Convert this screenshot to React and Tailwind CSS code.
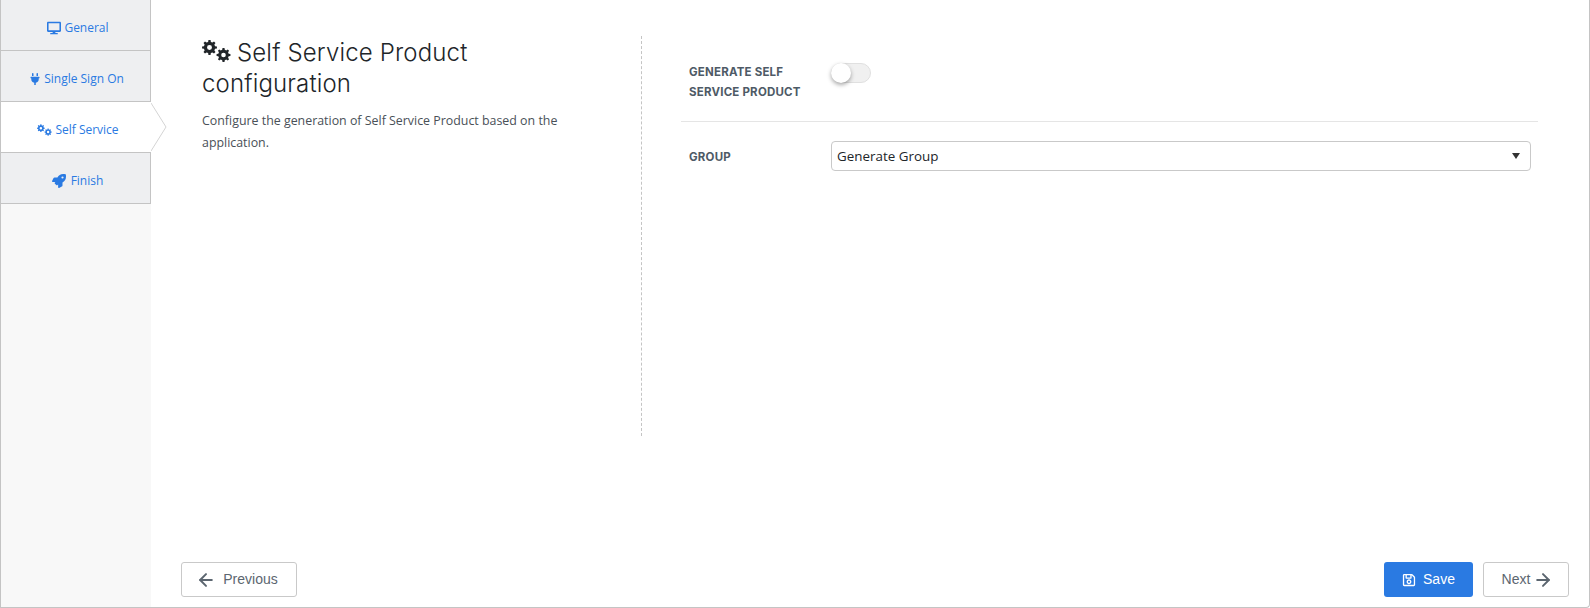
import React from 'react';
import { ArrowLeft, ArrowRight } from 'lucide-react';
import { FaDesktop, FaPlug, FaRocket, FaRegSave } from 'react-icons/fa';

// builds one gear outline with a round hole, 8 teeth
const gearPath = (cx, cy, r) => {
  const pts = [];
  const teeth = 8;
  for (let i = 0; i < teeth; i++) {
    const a = (i / teeth) * Math.PI * 2;
    const step = Math.PI / teeth;
    const corners = [
      [a - step * 0.62, r * 0.76],
      [a - step * 0.36, r],
      [a + step * 0.36, r],
      [a + step * 0.62, r * 0.76],
    ];
    corners.forEach(([t, d]) => pts.push(`${(cx + Math.cos(t) * d).toFixed(2)} ${(cy + Math.sin(t) * d).toFixed(2)}`));
  }
  const h = r * 0.33;
  return `M${pts.join(' L')} Z M${cx - h} ${cy} a${h} ${h} 0 1 0 ${h * 2} 0 a${h} ${h} 0 1 0 ${-h * 2} 0 Z`;
};

const Cogs = ({ className, width, height }) => (
  <svg className={className} width={width} height={height} viewBox="0 0 29 22" fill="currentColor">
    <path fillRule="evenodd" d={gearPath(7.5, 7.5, 7.5)} />
    <path fillRule="evenodd" d={gearPath(21.5, 15, 7)} />
  </svg>
);

const tabs = [
  { label: 'General', icon: <FaDesktop size={14} />, cls: 'gap-[3px] pl-[5px]' },
  { label: 'Single Sign On', icon: <FaPlug size={12} />, cls: 'gap-[3px] pl-[2px]' },
  { label: 'Self Service', icon: <Cogs width={15} height={12} />, cls: 'gap-[3px] pl-[4px]', active: true },
  { label: 'Finish', icon: <FaRocket size={14} />, cls: 'gap-[5px] pl-[4px]' },
];

const App = () => {
  return (
    <div className="h-[608px] w-[1590px] flex bg-white border-l border-r border-b border-[#c4c4c4] rounded-br-[4px] overflow-hidden font-['Open_Sans',sans-serif]">
      {/* Wizard steps */}
      <div className="w-[150px] shrink-0 bg-[#f8f8f8] flex flex-col">
        {tabs.map((tab) => (
          <div
            key={tab.label}
            className={`relative h-[51px] shrink-0 pt-[6px] border-b border-[#c4c4c4] flex items-center justify-center ${tab.cls} text-[12px] text-[#2a7ae2] ${
              tab.active ? 'bg-white' : 'bg-[#eeeff1] border-r'
            }`}
          >
            {tab.icon}
            <span>{tab.label}</span>
            {tab.active && (
              <svg className="absolute left-[150px] top-0" width="16" height="50" viewBox="0 0 16 50" fill="none">
                <path d="M0 0 L15 25 L0 50 Z" fill="#fff" />
                <path d="M0 1 L15 25 L0 49" stroke="#d4d4d4" strokeWidth="1" />
              </svg>
            )}
          </div>
        ))}
      </div>

      {/* Main */}
      <div className="flex-1 flex flex-col min-w-0">
        <div className="flex-1 flex pt-[36px] min-h-0">
          <div className="w-[491px] shrink-0 h-[400px] border-r border-dashed border-[#c4c4c4] pl-[51px] pr-[60px]">
            <h2 className="text-[24px] leading-[31px] mt-[1px] font-light text-[#212529] font-['Inter',sans-serif] tracking-[0.15px]">
              <Cogs className="inline-block align-[-1px] mr-[6px]" width={29} height={22} />
              Self Service Product configuration
            </h2>
            <p className="mt-[11px] text-[12.4px] leading-[22px] text-[#495057]">
              Configure the generation of Self Service Product based on the application.
            </p>
          </div>

          <div className="flex-1 pl-[39px] pr-[51px]">
            <div className="flex pl-[8px] pb-[19px] border-b border-[#e5e5e5] pt-[26px]">
              <div className="w-[142px] shrink-0 pr-[20px] text-[11.5px] leading-[20px] font-bold tracking-[0.2px] text-[#4e5a66] font-['Inter',sans-serif]">
                GENERATE SELF SERVICE PRODUCT
              </div>
              <div className="relative mt-[1px] w-[40px] h-[20px] rounded-full bg-[#f0f0f0] border border-[#e0e0e0]">
                <div className="absolute -left-[1px] -top-[1px] w-[20px] h-[20px] rounded-full bg-white shadow-[0_2px_4px_rgba(0,0,0,0.35)]" />
              </div>
            </div>
            <div className="flex items-center pl-[8px] pr-[7px] mt-[19px]">
              <div className="w-[142px] shrink-0 pt-[3px] text-[11.5px] font-bold tracking-[0.2px] text-[#4e5a66] font-['Inter',sans-serif]">GROUP</div>
              <div className="flex-1 h-[30px] px-[5px] flex items-center justify-between border border-[#c9c9c9] rounded-[4px] text-[13.4px] text-[#212529]">
                <span>Generate Group</span>
                <svg className="mr-[5px]" width="8" height="6" viewBox="0 0 8 6">
                  <path d="M0 0 H8 L4 6 Z" fill="#333" />
                </svg>
              </div>
            </div>
          </div>
        </div>

        {/* Footer buttons */}
        <div className="flex justify-between items-center pl-[30px] pr-[20px] pb-[10px]">
          <button className="w-[116px] h-[35px] pr-[4px] flex items-center justify-center gap-[7px] bg-white border border-[#c9c9c9] rounded-[3px] text-[14px] text-[#5c6670] font-['Liberation_Sans',sans-serif]">
            <ArrowLeft size={20} strokeWidth={2.4} />
            Previous
          </button>
          <div className="flex gap-[10px]">
            <button className="w-[89px] h-[35px] flex items-center justify-center gap-[7px] bg-[#2a7ae2] rounded-[3px] text-[14px] text-white font-['Liberation_Sans',sans-serif]">
              <FaRegSave size={14} />
              Save
            </button>
            <button className="w-[86px] h-[35px] pl-[3px] flex items-center justify-center gap-[3px] bg-white border border-[#c9c9c9] rounded-[3px] text-[14px] text-[#5c6670] font-['Liberation_Sans',sans-serif]">
              Next
              <ArrowRight size={20} strokeWidth={2.4} />
            </button>
          </div>
        </div>
      </div>
    </div>
  );
};

export default App;
